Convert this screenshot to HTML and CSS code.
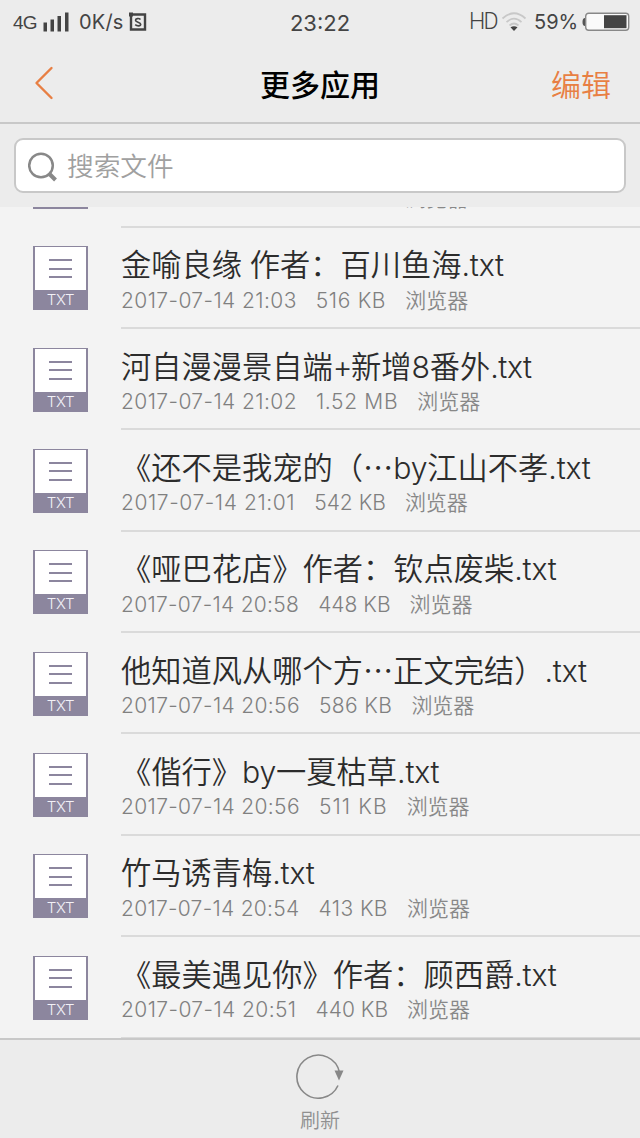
FILE: index.html
```html
<!DOCTYPE html>
<html lang="zh-CN">
<head>
<meta charset="utf-8">
<title>更多应用</title>
<link rel="stylesheet" href="styles.css">
</head>
<body>
<div class="screen">
  <div class="status">
    <div class="status-left">
      <span class="net">4G</span>
      <svg class="signal" width="26" height="20" viewBox="0 0 26 20"><path d="M.5 10.500h3.500v9H.5zM7.500 7.500H11v12H7.500zM14.500 4H18v15.500h-3.500zM22 .5h3.500v19H22z" fill="#444"/></svg>
      <span class="speed">0K/s</span>
      <svg class="simbox" width="18" height="20" viewBox="0 0 18 20"><path d="M2 2.500h14v15H2z" fill="none" stroke="#444" stroke-width="2.400"/><path d="M0 .5h4v4H0z" fill="#444"/><path d="M11.500 7.500C10 6 6.500 6.300 6.500 8.300S11.700 10 11.700 12.200 8 14.200 6.200 12.700" fill="none" stroke="#444" stroke-width="1.600"/></svg>
    </div>
    <div class="clock">23:22</div>
    <div class="status-right">
      <span class="hd">HD</span>
      <svg class="wifi" width="26" height="19" viewBox="0 0 26 19"><path d="M1.500 6.500Q13-4 24.500 6.500M5.500 10.200Q13 3.200 20.500 10.200M8.500 13.500Q13 9.500 17.500 13.500" fill="none" stroke="#c8c8c8" stroke-width="1.700"/><path d="M9.500 15.300Q13 13 16.500 15.300L13 19z" fill="#444"/></svg>
      <span class="pct">59%</span>
      <svg class="battery" width="48" height="20" viewBox="0 0 48 20"><path d="M3 6Q.5 6 .5 10T3 14z" fill="#555"/><rect x="3.700" y="1.200" width="43" height="17" rx="3" fill="#fafafa" stroke="#888" stroke-width="1.400"/><path d="M22 3.200h22.500v13H22z" fill="#444"/></svg>
    </div>
  </div>
  <header class="nav">
    <svg class="back" width="20" height="34" viewBox="0 0 20 34"><path d="M17.500 2L2.500 17l15 15" fill="none" stroke="#e87f43" stroke-width="2.400" stroke-linecap="round" stroke-linejoin="round"/></svg>
    <h1 class="title">更多应用</h1>
    <span class="edit">编辑</span>
  </header>
  <div class="search-bar">
    <div class="search">
      <svg class="lens" width="30" height="30" viewBox="0 0 30 30"><circle cx="13" cy="13.500" r="11.800" fill="none" stroke="#888" stroke-width="2.500"/><path d="M20.500 21l7 7" stroke="#888" stroke-width="4"/></svg>
      <span class="placeholder">搜索文件</span>
    </div>
  </div>
  <main class="viewport">
    <ul class="list">
      <li class="row"><div class="file"><i></i><i></i><i></i><b>TXT</b></div><div class="info"><div class="name">&nbsp;</div><div class="meta"><span class="date">2017-07-14 21:03</span><span class="size">516 KB</span><span class="source">浏览器</span></div></div></li>
      <li class="row"><div class="file"><i></i><i></i><i></i><b>TXT</b></div><div class="info"><div class="name">金喻良缘 <span class="author">作者：百川鱼海</span><span class="lat">.txt</span></div><div class="meta"><span class="date">2017-07-14 21:03</span><span class="size">516 KB</span><span class="source">浏览器</span></div></div></li>
      <li class="row"><div class="file"><i></i><i></i><i></i><b>TXT</b></div><div class="info"><div class="name">河自漫漫景自端<span class="lat plus">+</span>新增<span class="lat">8</span>番外<span class="lat">.txt</span></div><div class="meta"><span class="date">2017-07-14 21:02</span><span class="size">1.52 MB</span><span class="source">浏览器</span></div></div></li>
      <li class="row"><div class="file"><i></i><i></i><i></i><b>TXT</b></div><div class="info"><div class="name">《还不是我宠的（…<span class="lat">by</span>江山不孝<span class="lat">.txt</span></div><div class="meta"><span class="date">2017-07-14 21:01</span><span class="size">542 KB</span><span class="source">浏览器</span></div></div></li>
      <li class="row"><div class="file"><i></i><i></i><i></i><b>TXT</b></div><div class="info"><div class="name">《哑巴花店》作者：钦点废柴<span class="lat">.txt</span></div><div class="meta"><span class="date">2017-07-14 20:58</span><span class="size">448 KB</span><span class="source">浏览器</span></div></div></li>
      <li class="row"><div class="file"><i></i><i></i><i></i><b>TXT</b></div><div class="info"><div class="name">他知道风从哪个方…正文完结）<span class="lat">.txt</span></div><div class="meta"><span class="date">2017-07-14 20:56</span><span class="size">586 KB</span><span class="source">浏览器</span></div></div></li>
      <li class="row"><div class="file"><i></i><i></i><i></i><b>TXT</b></div><div class="info"><div class="name">《偕行》<span class="lat">by</span>一夏枯草<span class="lat">.txt</span></div><div class="meta"><span class="date">2017-07-14 20:56</span><span class="size">511 KB</span><span class="source">浏览器</span></div></div></li>
      <li class="row"><div class="file"><i></i><i></i><i></i><b>TXT</b></div><div class="info"><div class="name">竹马诱青梅<span class="lat">.txt</span></div><div class="meta"><span class="date">2017-07-14 20:54</span><span class="size">413 KB</span><span class="source">浏览器</span></div></div></li>
      <li class="row"><div class="file"><i></i><i></i><i></i><b>TXT</b></div><div class="info"><div class="name">《最美遇见你》作者：顾西爵<span class="lat">.txt</span></div><div class="meta"><span class="date">2017-07-14 20:51</span><span class="size">440 KB</span><span class="source">浏览器</span></div></div></li>
    </ul>
  </main>
  <footer class="toolbar">
    <svg class="refresh" width="50" height="48" viewBox="0 0 50 48"><path d="M44.500 19.500A21.500 21.500 0 1 0 43 32.500" fill="none" stroke="#888" stroke-width="1.600"/><path d="M39.500 17.500h9L44 27.500z" fill="#888"/></svg>
    <span class="refresh-label">刷新</span>
  </footer>
</div>
</body>
</html>
```
FILE: styles.css
```css
* { box-sizing: border-box; }
body { margin: 0; font-family: Inter, "Noto Sans CJK SC", sans-serif; }
.screen { width: 640px; height: 1138px; display: flex; flex-direction: column; background: #f3f3f3; overflow: hidden; }
.status { height: 44px; display: grid; grid-template-columns: 1fr auto 1fr; background: #ececec; color: #444; line-height: 44px; flex: none; }
.status-left, .status-right { display: flex; align-items: center; height: 43px; }
.status-left { padding-left: 13px; }
.net { width: 30px; font: 400 19px/48px "Liberation Sans", sans-serif; letter-spacing: -0.8px; padding-top: 3px; }
.signal { margin-right: 10px; }
.speed { width: 50px; font-size: 20px; letter-spacing: 0.2px; line-height: 43px; padding-top: 2px; }
.clock { font-size: 22px; line-height: 46px; }
.status-right { justify-content: flex-end; padding-right: 10px; }
.hd { font: 300 23px/44px Roboto, sans-serif; width: 32px; letter-spacing: -1.8px; }
.wifi { margin-right: 7px; }
.pct { font-size: 20px; width: 48px; }
.nav { height: 80px; padding: 0 29px 0 34px; display: grid; grid-template-columns: 20px 1fr 60px; align-items: center; background: #ececec; border-bottom: 2px solid #c8c8c8; flex: none; }
.title { margin: -1px 0 0; padding-left: 35px; text-align: center; font: 500 30px/38px "Noto Sans CJK SC", sans-serif; color: #000; }
.edit { font: 350 30px/40px "Noto Sans CJK SC", sans-serif; color: #e87f43; }
.search-bar { height: 83px; padding: 14px 14px 0; background: #ececec; flex: none; }
.search { height: 55px; display: flex; align-items: center; padding-left: 12px; background: #fff; border: 2px solid #c8c8c8; border-radius: 9px; }
.lens { margin: 2px 9px 0 0; }
.placeholder { font: 350 26.700px/38px "Noto Sans CJK SC", sans-serif; color: #a0a0a0; margin-top: -2px; }
.viewport { height: 831px; overflow: hidden; flex: none; }
.list { list-style: none; margin: -80.600px 0 0; padding: 0; }
.row { height: 101.350px; display: flex; padding-left: 33px; }
.file { width: 55px; height: 64px; margin: 18.500px 33px 0 0; border: 2px solid #8c869e; border-width: 1.500px 2px; background: #fff; display: flex; flex-direction: column; align-items: center; padding-top: 12px; flex: none; }
.file i { width: 23px; height: 2px; margin-bottom: 6.500px; background: #8c869e; flex: none; }
.file b { width: 55px; height: 19px; margin-top: auto; background: #8c869e; color: #f3f1f7; font: 300 15px/20px Inter, sans-serif; letter-spacing: -0.3px; text-align: center; flex: none; }
.info { flex: 1; padding-top: 13.500px; border-bottom: 2px solid #dadada; white-space: nowrap; }
.name { height: 45.500px; font: 350 30.250px/44px "Noto Sans CJK SC", sans-serif; color: #2c2c2c; }
.author { margin-left: 1px; }
.lat { font-family: Inter, sans-serif; font-weight: 350; letter-spacing: -0.2px; }
.plus { letter-spacing: -1.500px; }
.plus ~ .lat { letter-spacing: -0.400px; }
.meta { display: flex; align-items: flex-start; font: 300 21px/28px Inter, "Noto Sans CJK SC", sans-serif; color: #808080; }
.date, .size { margin-right: 19px; letter-spacing: 0.400px; }
.source { font: 350 21px/24px "Noto Sans CJK SC", sans-serif; color: #888; }
.row:nth-child(-n+3) .size { letter-spacing: 0.650px; }
.row:nth-child(4) .date { letter-spacing: 0.580px; }
.row:nth-child(4) .size, .row:nth-child(5) .size { letter-spacing: 0; }
.row:nth-child(5) .date, .row:nth-child(8) .date { letter-spacing: 0.280px; }
.row:nth-child(6) .date, .row:nth-child(7) .date { letter-spacing: 0.340px; }
.row:nth-child(7) .size { letter-spacing: 1.100px; }
.row:nth-child(9) .size { letter-spacing: 0; }
.toolbar { flex: 1; display: flex; flex-direction: column; align-items: center; padding-top: 13px; background: #ececec; border-top: 2px solid #c8c8c8; }
.refresh-label { font: 350 20px/28px "Noto Sans CJK SC", sans-serif; color: #909090; margin-top: 5px; }
```
